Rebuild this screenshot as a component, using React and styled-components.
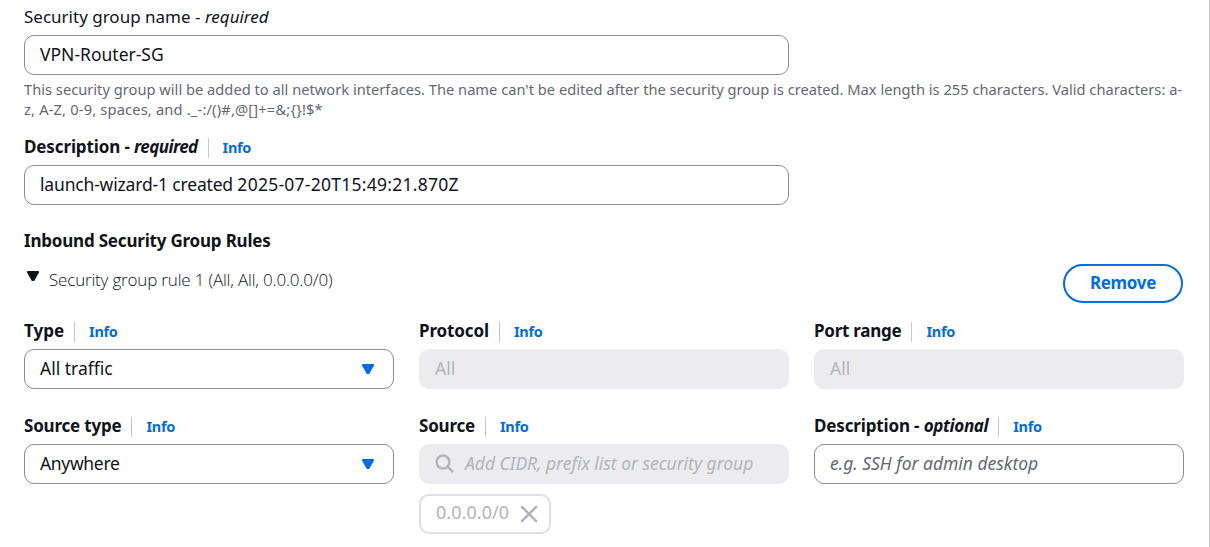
import React from "react";
import styled, { createGlobalStyle, css } from "styled-components";

const GlobalStyle = createGlobalStyle`
  *, *::before, *::after { box-sizing: border-box; }
  body {
    margin: 0;
    background: #fff;
    color: #0f141a;
    font-family: "Noto Sans", "Open Sans", sans-serif;
    font-size: 17px;
    line-height: 25px;
    overflow: hidden;
  }
`;

const Panel = styled.main`
  width: 1210px;
  height: 547px;
  padding: 5px 25px 0 24px;
  border-right: 1px solid #c6c6cd;
  overflow: hidden;
`;

const Field = styled.div`
  width: ${(p) => p.$width || "100%"};
  display: flex;
  flex-direction: column;
  margin-bottom: ${(p) => p.$after || 0}px;
`;

const LabelRow = styled.div`
  display: flex;
  align-items: center;
  height: 25px;
  margin-bottom: 5px;
`;

const Text = styled.span`
  white-space: nowrap;
  padding-bottom: 2px;
  font-weight: ${(p) => p.$weight || 400};
  letter-spacing: ${(p) => p.$track || 0}px;
  em { letter-spacing: ${(p) => p.$emTrack ?? p.$track ?? 0}px; }
`;

const Timestamp = styled.span`
  letter-spacing: 0.26px;
`;

const InfoLink = styled.a`
  display: flex;
  align-items: center;
  height: 20px;
  margin: 1px 0 0 10px;
  padding: 0 0 1px 14px;
  border-left: 1px solid #c6c6cd;
  color: #006ce0;
  font-size: 14.5px;
  font-weight: 700;
  letter-spacing: -0.3px;
`;

const Control = styled.div`
  display: flex;
  align-items: center;
  width: 100%;
  height: 40px;
  padding: 0 15px;
  border: 1px solid #8c8c94;
  border-radius: 10px;
  background: #fff;
  font-size: 17.5px;
  ${(p) => p.$placeholder && css`color: #656871; font-style: italic;`}
  ${(p) => p.$disabled && css`
    background: #ebebf0;
    border-color: #ebebf0;
    color: #b4b4bb;
  `}
`;

const Hint = styled.p`
  margin: 4px 0 1px;
  color: #656871;
  font-size: 14.67px;
  line-height: 20px;
  white-space: nowrap;
`;

const SectionTitle = styled.h3`
  display: flex;
  align-items: center;
  margin: 0;
  height: 25px;
  font-size: 17px;
  line-height: 25px;
`;

const RuleHeader = styled.div`
  display: flex;
  justify-content: space-between;
  height: 39px;
  margin: 10px 0 16px;
  padding-right: 1px;
`;

const RuleToggle = styled.div`
  display: flex;
  height: 25px;
  margin-top: 3px;
  padding-left: 2px;
  gap: 9px;
  font-family: "Open Sans", "Noto Sans", sans-serif;
`;

const RemoveButton = styled.button`
  display: flex;
  align-items: center;
  justify-content: center;
  width: 120px;
  height: 39px;
  padding: 0;
  border: 2px solid #006ce0;
  border-radius: 20px;
  background: #fff;
  color: #006ce0;
  font: 700 17px/25px "Noto Sans", sans-serif;
`;

const RuleGrid = styled.div`
  display: grid;
  grid-template-columns: repeat(3, 370px);
  gap: 25px;
`;

const Token = styled.div`
  display: flex;
  align-items: center;
  justify-content: space-between;
  width: 132px;
  height: 40px;
  margin-top: 10px;
  padding: 0 11px 0 15px;
  border: 2px solid #dedee3;
  border-radius: 10px;
  color: #b4b4bb;
  font-size: 18px;
  ${Text} { padding-bottom: 4px; }
`;

const Arrow = styled.svg`
  flex: none;
  width: 14px;
  height: 12px;
  fill: ${(p) => p.$color};
  stroke: ${(p) => p.$color};
  stroke-width: 2;
  stroke-linejoin: round;
  margin: ${(p) => p.$margin || 0};
`;

const LineIcon = styled.svg`
  flex: none;
  fill: none;
  stroke: #b4b4bb;
  stroke-width: 2.5;
  stroke-linecap: ${(p) => p.$cap || "butt"};
  margin-right: ${(p) => p.$after || 0}px;
`;

const Caret = (props) => (
  <Arrow viewBox="0 0 14 12" {...props}>
    <path d="M1.9 2h10.2L7.6 10H6.4z" />
  </Arrow>
);

const Label = ({ children, info = true, weight = 700, track, emTrack }) => (
  <LabelRow>
    <Text $weight={weight} $track={track} $emTrack={emTrack}>{children}</Text>
    {info && <InfoLink>Info</InfoLink>}
  </LabelRow>
);

const Select = ({ children, track }) => (
  <Control>
    <Text $track={track}>{children}</Text>
    <Caret $color="#006ce0" $margin="0 3px 0 auto" />
  </Control>
);

export default function App() {
  return (
    <>
      <GlobalStyle />
      <Panel>
        <Field $width="765px" $after={15}>
          <Label weight={400} info={false}>Security group name - <em>required</em></Label>
          <Control><Text>VPN-Router-SG</Text></Control>
          <Hint>
            <Text $track={0.008}>This security group will be added to all network interfaces. The name can't be edited after the security group is created. Max length is 255 characters. Valid characters: a-</Text>
            <br />
            <Text $track={0.17}>{"z, A-Z, 0-9, spaces, and ._-:/()#,@[]+=&;{}!$*"}</Text>
          </Hint>
        </Field>
        <Field $width="765px" $after={24}>
          <Label track={-0.12} emTrack={-0.58}>Description - <em>required</em></Label>
          <Control><Text $track={-0.17}>launch-wizard-1 created <Timestamp>2025-07-20T15:49:21.870Z</Timestamp></Text></Control>
        </Field>
        <SectionTitle><Text $weight={700} $track={-0.2}>Inbound Security Group Rules</Text></SectionTitle>
        <RuleHeader>
          <RuleToggle>
            <Caret $color="#0f141a" $margin="3px 0 0" />
            <Text $weight={300} $track={-0.18}>Security group rule 1 (All, All, 0.0.0.0/0)</Text>
          </RuleToggle>
          <RemoveButton><Text $weight={700} $track={-0.33}>Remove</Text></RemoveButton>
        </RuleHeader>
        <RuleGrid>
          <Field>
            <Label>Type</Label>
            <Select>All traffic</Select>
          </Field>
          <Field>
            <Label track={-0.12}>Protocol</Label>
            <Control $disabled><Text>All</Text></Control>
          </Field>
          <Field>
            <Label track={-0.25}>Port range</Label>
            <Control $disabled><Text>All</Text></Control>
          </Field>
          <Field>
            <Label track={-0.2}>Source type</Label>
            <Select track={-0.33}>Anywhere</Select>
          </Field>
          <Field>
            <Label track={-0.2}>Source</Label>
            <Control $disabled $placeholder>
              <LineIcon width="20" height="20" viewBox="0 0 20 20" $after={10}>
                <circle cx="8" cy="8" r="6.4" />
                <path d="M12.6 12.6l5.6 5.6" />
              </LineIcon>
              <Text $track={-0.03}>Add CIDR, prefix list or security group</Text>
            </Control>
            <Token>
              <Text $track={0.05}>0.0.0.0/0</Text>
              <LineIcon width="18" height="18" viewBox="0 0 18 18" $cap="round">
                <path d="M2 2l14 14M16 2L2 16" />
              </LineIcon>
            </Token>
          </Field>
          <Field>
            <Label track={-0.15} emTrack={-0.36}>Description - <em>optional</em></Label>
            <Control $placeholder><Text $track={-0.03}>e.g. SSH for admin desktop</Text></Control>
          </Field>
        </RuleGrid>
      </Panel>
    </>
  );
}
